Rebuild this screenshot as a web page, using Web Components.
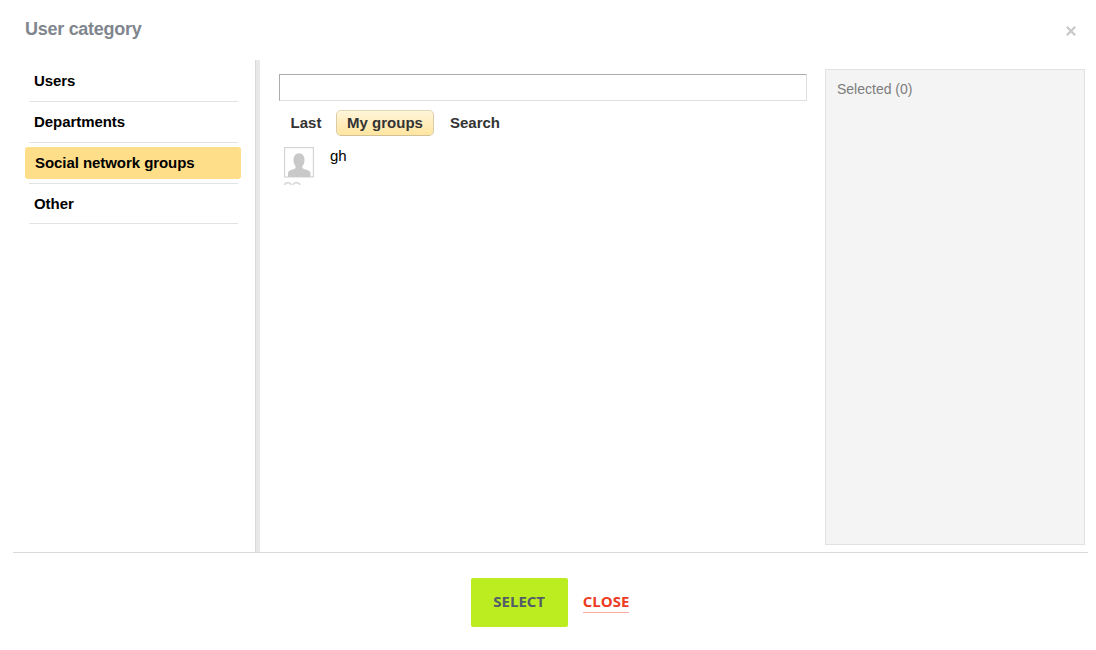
<!DOCTYPE html>
<html lang="en">
<head>
<meta charset="utf-8">
<title>User category</title>
<style>
html,body{margin:0;height:100%;background:#fff;overflow:hidden}
body{font-family:"Liberation Sans",Arial,sans-serif}
</style>
</head>
<body>
<user-dialog>
  <span slot="title">User category</span>
  <category-nav slot="nav">
    <category-item>Users</category-item>
    <category-item>Departments</category-item>
    <category-item active>Social network groups</category-item>
    <category-item>Other</category-item>
  </category-nav>
  <group-finder slot="main">
    <finder-tab slot="tabs" style="width:54px">Last</finder-tab>
    <finder-tab slot="tabs" active style="width:98px">My groups</finder-tab>
    <finder-tab slot="tabs" style="width:76px">Search</finder-tab>
    <group-row>gh</group-row>
  </group-finder>
  <selected-panel slot="side">Selected (0)</selected-panel>
  <dialog-actions slot="footer"></dialog-actions>
</user-dialog>
<script>
const define = (name, html) => {
  const template = document.createElement('template');
  template.innerHTML = html;
  customElements.define(name, class extends HTMLElement {
    constructor() {
      super();
      this.attachShadow({mode: 'open'}).append(template.content.cloneNode(true));
    }
  });
};

define('user-dialog', `
<style>
*{box-sizing:border-box}
:host{display:flex;flex-direction:column;width:1096px;height:650px;background:#fff}
header{height:60px;flex:none;display:flex;justify-content:space-between;padding:18px 20px 0 25px}
h1{margin:0;font-size:18px;line-height:22px;font-weight:bold;color:#80868e;letter-spacing:-.28px}
button{border:0;background:none;padding:0;width:10px;height:10px;margin-top:8px}
button svg{display:block}
main{height:493px;flex:none;margin:0 8px 0 13px;border-bottom:1px solid #d9d9d9;display:grid;grid-template-columns:247px 565px 260px;align-items:start}
</style>
<header><h1><slot name="title"></slot></h1>
<button aria-label="Close"><svg width="10" height="10" viewBox="0 0 10 10"><path d="M.8 .8l8.400 8.400M9.200 .8L.8 9.200" stroke="#c8c8c8" stroke-width="2.200"/></svg></button></header>
<main><slot name="nav"></slot><slot name="main"></slot><slot name="side"></slot></main>
<slot name="footer"></slot>`);

define('category-nav', `
<style>:host{display:block;box-sizing:border-box;width:247px;height:492px;border-right:4px solid #e8e8e8;padding:0 16px 0 12px;background:linear-gradient(#d9d9d9,#d9d9d9) right/1px 100% no-repeat}</style>
<slot></slot>`);

define('category-item', `
<style>
:host{display:flex;flex-direction:column;height:41px;font-size:15px;line-height:18px;font-weight:bold;letter-spacing:-.06px;color:#000}
:host(:first-child){height:42px}
:host(:last-child){height:40px}
div{flex:1;padding:11px 0 0 9px}
:host(:first-child) div{padding-top:12px}
:host([active]) div{box-sizing:border-box;flex:none;height:32px;margin:4px -1px 4px 0;padding:7px 0 0 10px;border-radius:3px;background:#ffde89}
hr{margin:0 2px 0 4px;border:0;height:1px;background:#e3e3e3}
</style>
<div><span><slot></slot></span></div><hr>`);

define('group-finder', `
<style>
:host{display:block;padding:14px 18px 0 19px}
input{display:block;box-sizing:border-box;width:528px;height:27px;margin:0;border:1px solid;border-color:#ababab #dfdfdf #dfdfdf #ababab;background:#fff;outline:0}
nav{display:flex;gap:3px;margin-top:9px}
</style>
<input type="text" aria-label="Filter"><nav><slot name="tabs"></slot></nav><slot></slot>`);

define('finder-tab', `
<style>
:host{display:flex;justify-content:center;box-sizing:border-box;height:26px;padding-top:3px;font-size:15px;line-height:18px;font-weight:bold;color:#333;border:1px solid transparent;border-radius:5px}
:host([active]){border-color:#e2d7b5 #d9cca6 #d1c197;background:linear-gradient(#fff5da,#ffe5a0) padding-box}
</style>
<span><slot></slot></span>`);

define('group-row', `
<style>
:host{display:flex;gap:16px;margin:11px 0 0 5px;height:38px;font-size:15px;line-height:18px;color:#000}
.icons{width:30px}
svg{display:block}
</style>
<div class="icons"><svg width="30" height="38" viewBox="0 0 30 38"><rect x=".6" y=".6" width="28.800" height="29.300" fill="#fff" stroke="#d4d4d4" stroke-width="1.200"/><path d="M4 30v-4c0-1.800 1.500-2.500 3.800-3.300 2.200-.7 3.500-1 3.800-1.700v-2c-1.300-1.300-2.100-3.200-2.100-6C9.500 9 11.500 6.200 15 6.200S20.500 9 20.500 13c0 2.800-.8 4.700-2.100 6v2c.3.700 1.600 1 3.800 1.700 2.300.8 4.300 1.500 4.300 3.300v4z" fill="#c9c9c9"/><path d="M.6 38c.1-1.500 1.400-2.200 3.200-2.200S7 36.500 7.100 38M9.300 38c.1-1.500 1.400-2.200 3.200-2.200s3.200.7 3.300 2.200" fill="none" stroke="#d5d5d5" stroke-width="1.500"/></svg></div>
<span><slot></slot></span>`);

define('selected-panel', `
<style>:host{display:block;box-sizing:border-box;width:260px;height:476px;margin-top:9px;padding:10px 11px;font-size:14px;line-height:18px;color:#7d7d7d;background:#f4f4f4;border:1px solid #e1e1e1}</style>
<slot></slot>`);

define('dialog-actions', `
<style>
:host{display:flex;justify-content:center;gap:15px;margin:25px 0 0 4px;font:bold 15px/20px "Open Sans",sans-serif}
button{width:97px;height:49px;border:0;border-radius:2px;padding:0 0 3px;background:#bbed21;color:#535c69;font:inherit}
a{display:block;height:21px;box-sizing:border-box;margin-top:14px;color:#ee3b23;border-bottom:1px solid #faada2;line-height:18px}
</style>
<button>SELECT</button><a>CLOSE</a>`);
</script>
</body>
</html>
